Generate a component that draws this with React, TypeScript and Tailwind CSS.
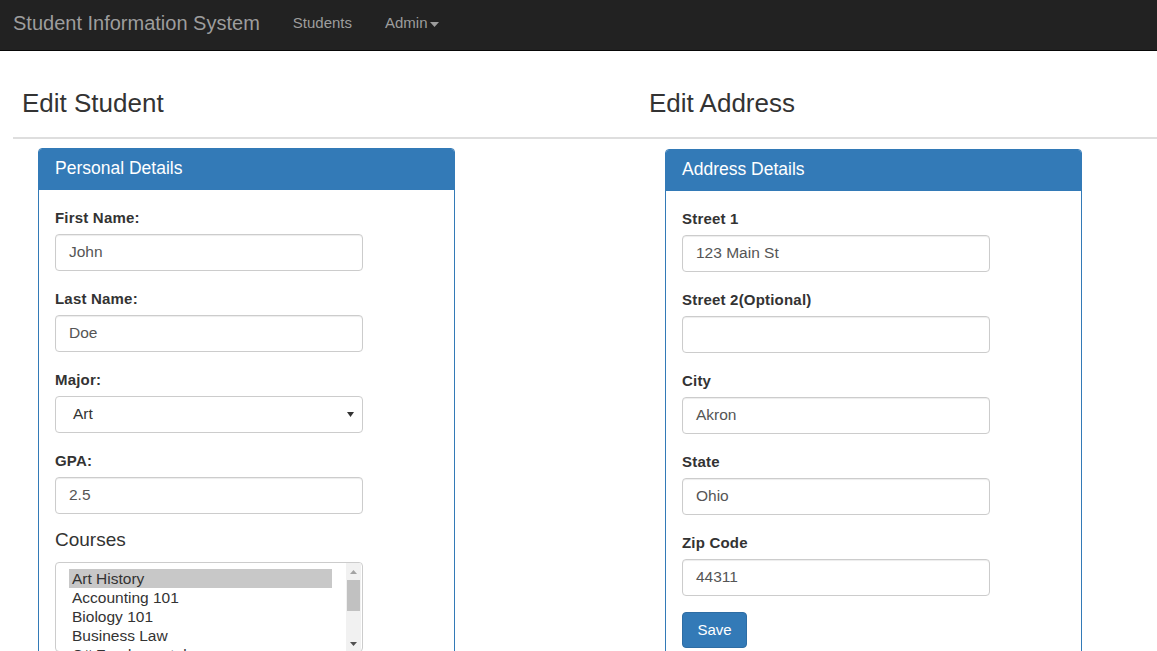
// Student Information System — edit student / edit address screen.

const FONT = { fontFamily: '"Liberation Sans", Arial, sans-serif' };

const COURSES = ['Art History', 'Accounting 101', 'Biology 101', 'Business Law', 'C# Fundamentals'];

function Field({ label, value }: { label: string; value: string }) {
  return (
    <div className="mb-[17px]">
      <div className="text-[15px] leading-[21px] font-bold text-[#333] tracking-[0.2px] mb-[6px]">{label}</div>
      <div className="w-[308px] h-[37px] border border-[#ccc] rounded-[4px] bg-white flex items-center pl-[13px] pb-px text-[15.5px] text-[#555] shadow-[inset_0_1px_1px_rgba(0,0,0,0.075)]">
        {value}
      </div>
    </div>
  );
}

function SelectField({ label, value }: { label: string; value: string }) {
  return (
    <div className="mb-[17px]">
      <div className="text-[15px] leading-[21px] font-bold text-[#333] tracking-[0.2px] mb-[6px]">{label}</div>
      <div className="w-[308px] h-[37px] border border-[#ccc] rounded-[4px] bg-white flex items-center justify-between pl-[17px] pr-[8px] pb-px text-[15.5px] text-[#333]">
        <span>{value}</span>
        <svg width="7" height="5" viewBox="0 0 7 5">
          <path d="M0 0h7L3.5 5z" fill="#333" />
        </svg>
      </div>
    </div>
  );
}

function CourseList() {
  return (
    <div className="w-[308px] h-[90px] border border-[#ccc] rounded-[4px] bg-white flex overflow-hidden">
      <div className="flex-1 pl-[13px] pt-[6px] overflow-hidden">
        {COURSES.map((c, i) => (
          <div
            key={c}
            className={
              'h-[19px] leading-[19px] pl-[3px] text-[15.5px] text-[#333] w-[263px] whitespace-nowrap ' +
              (i === 0 ? 'bg-[#c8c8c8]' : '')
            }
          >
            {c}
          </div>
        ))}
      </div>
      <div className="w-[15px] mr-px bg-[#f1f1f1] flex flex-col items-center">
        <div className="h-[17px] flex items-center justify-center">
          <svg width="7" height="4" viewBox="0 0 7 4">
            <path d="M0 4h7L3.5 0z" fill="#a3a3a3" />
          </svg>
        </div>
        <div className="w-[13px] h-[31px] bg-[#c1c1c1]" />
        <div className="flex-1" />
        <div className="h-[15px] flex items-center justify-center">
          <svg width="7" height="4" viewBox="0 0 7 4">
            <path d="M0 0h7L3.5 4z" fill="#505050" />
          </svg>
        </div>
      </div>
    </div>
  );
}

function Panel({ title, children }: { title: string; children: React.ReactNode }) {
  return (
    <div className="w-[417px] border border-[#337ab7] rounded-[4px] bg-white">
      <div className="h-[41px] bg-[#337ab7] rounded-t-[3px] flex items-center pl-4 pb-[3px] text-white text-[17.5px]">
        {title}
      </div>
      <div className="pt-[17px] px-4 pb-4">{children}</div>
    </div>
  );
}

export default function App() {
  return (
    <div className="min-h-screen bg-white overflow-hidden" style={FONT}>
      <nav className="h-[51px] bg-[#222] border-b border-[#080808] flex items-center pb-[5px]">
        <span className="ml-[13px] text-[20px] text-[#9d9d9d]">Student Information System</span>
        <span className="ml-[33px] text-[15px] text-[#9d9d9d] mt-[2px]">Students</span>
        <span className="ml-[33px] text-[15px] text-[#9d9d9d] mt-[2px] flex items-center">
          Admin
          <svg width="9" height="5" viewBox="0 0 9 5" className="ml-[2px] mt-[2px]">
            <path d="M0 0h9L4.5 5z" fill="#9d9d9d" />
          </svg>
        </span>
      </nav>

      <div className="flex pl-[7px] mt-[38px]">
        <h3 className="w-[627px] shrink-0 pl-[15px] text-[26px] leading-[29px] text-[#333]">Edit Student</h3>
        <h3 className="flex-1 pl-[15px] text-[26px] leading-[29px] text-[#333]">Edit Address</h3>
      </div>

      <div className="ml-[13px] mt-[19px] h-[2px] bg-[#dedede]" />

      <div className="flex pl-[7px] mt-[9px]">
        <div className="w-[627px] shrink-0 pl-[31px]">
          <Panel title="Personal Details">
            <Field label="First Name:" value="John" />
            <Field label="Last Name:" value="Doe" />
            <SelectField label="Major:" value="Art" />
            <Field label="GPA:" value="2.5" />
            <div className="text-[19px] leading-[22px] text-[#333] mt-[-2px] mb-[11px]">Courses</div>
            <CourseList />
          </Panel>
        </div>
        <div className="flex-1 pl-[31px] mt-px">
          <Panel title="Address Details">
            <Field label="Street 1" value="123 Main St" />
            <Field label="Street 2(Optional)" value="" />
            <Field label="City" value="Akron" />
            <Field label="State" value="Ohio" />
            <Field label="Zip Code" value="44311" />
            <button className="w-[65px] h-[36px] bg-[#337ab7] border border-[#2e6da4] rounded-[4px] text-white text-[15px] mt-[-1px]">
              Save
            </button>
          </Panel>
        </div>
      </div>
    </div>
  );
}
